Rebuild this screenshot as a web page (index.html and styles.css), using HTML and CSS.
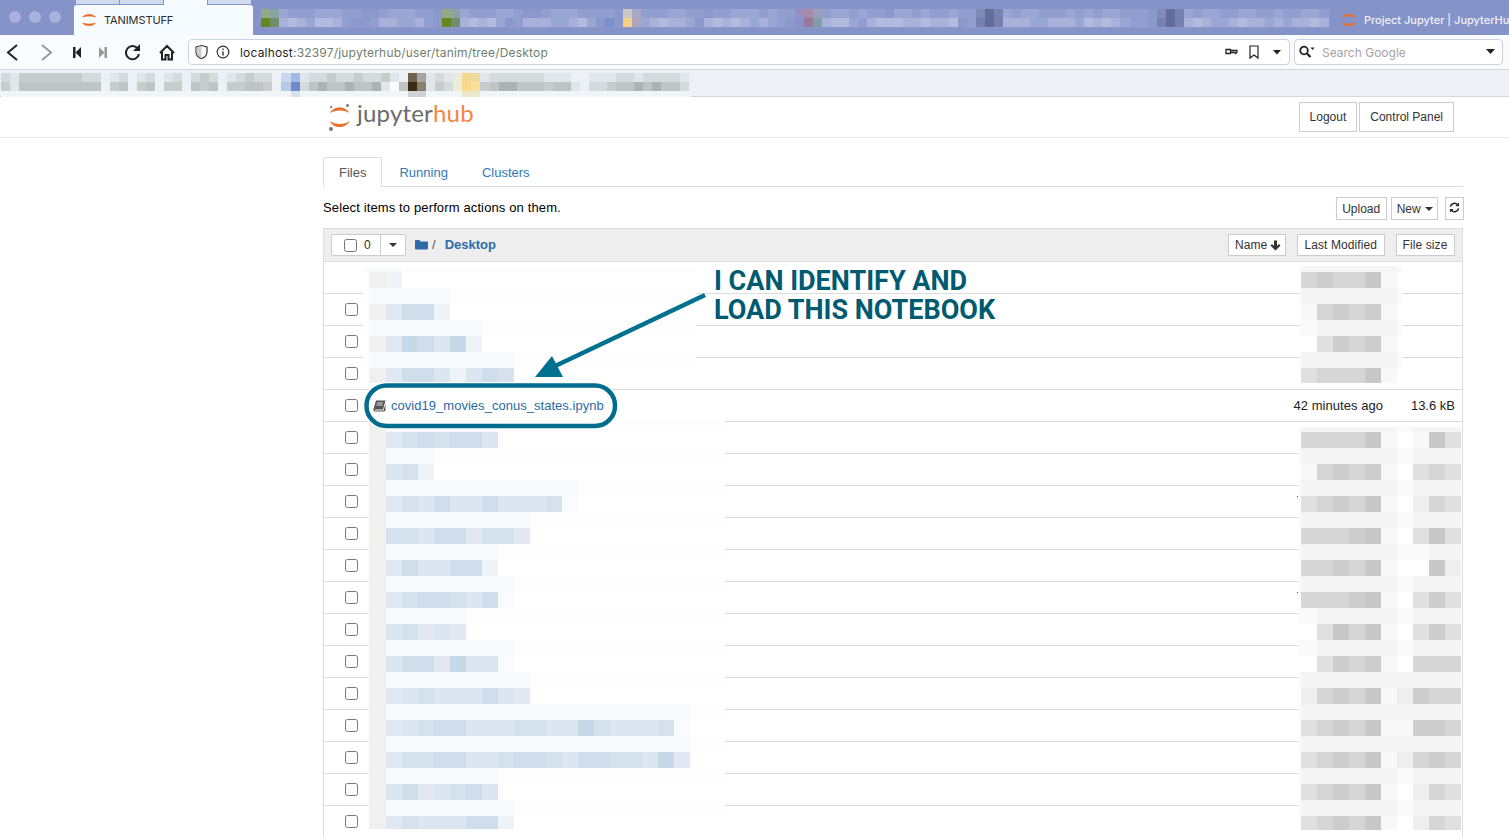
FILE: index.html
```html
<!DOCTYPE html>
<html>

<head>
	<title>Project Jupyter | JupyterHub</title>
	<link rel="stylesheet" href="styles.css">
</head>

<body>
	<div class="tabstrip">
		<div class="dots"><span></span><span></span><span></span></div>
		<div class="tab-marks"><span></span><span></span><span class="mark-open"></span><span></span></div>
		<div class="tab">
			<svg class="tab-icon" width="16" height="16" viewBox="0 0 16 16">
				<path d="M1 5.500C3 .8 13 .8 15 5.500C12 4 4 4 1 5.500Z" fill="#e8702a" />
				<path d="M1 10.500C3 15.200 13 15.200 15 10.500C12 12 4 12 1 10.500Z" fill="#e8702a" />
			</svg>
			<span>TANIMSTUFF</span>
		</div>
		<div class="mosaic" id="tabsBlur"></div>
		<div class="tab-other">
			<svg class="tab-icon" width="16" height="16" viewBox="0 0 16 16">
				<path d="M1 5.500C3 .8 13 .8 15 5.500C12 4 4 4 1 5.500Z" fill="#e8702a" />
				<path d="M1 10.500C3 15.200 13 15.200 15 10.500C12 12 4 12 1 10.500Z" fill="#e8702a" />
			</svg>
			<span>Project Jupyter | JupyterHub</span>
		</div>
	</div>

	<div class="toolbar">
		<svg class="nav-icons" width="188" height="34" viewBox="0 0 188 34">
			<path d="M17 10L8 17.500L17 25" fill="none" stroke="#222" stroke-width="2" />
			<path d="M42 10L51 17.500L42 25" fill="none" stroke="#999" stroke-width="2" />
			<path d="M73 12H75.500V23H73ZM75.500 17.500L81 12V23Z" fill="#222" />
			<path d="M107 12H104.500V23H107ZM104.500 17.500L99 12V23Z" fill="#999" />
			<path d="M138 14A6.600 6.600 0 1 0 139 19" fill="none" stroke="#222" stroke-width="2" />
			<path d="M140 9V16H133Z" fill="#222" />
			<path d="M160 18L167 11L174 18M162 17V24.500H165.500V20H168.500V24.500H172V17" fill="none" stroke="#222" stroke-width="2" />
		</svg>
		<div class="urlbar">
			<svg class="url-icons" width="45" height="16" viewBox="0 0 45 16">
				<path d="M1 3L6.500 1.500L12 3V8C12 11 9.500 13.500 6.500 14.500C3.500 13.500 1 11 1 8Z" fill="none" stroke="#333" stroke-width="1.200" />
				<path d="M6.500 2V14C3.500 13 1.500 11 1.500 8V3.400Z" fill="#ccc" />
				<circle cx="28" cy="8" r="5.800" fill="none" stroke="#333" stroke-width="1.200" />
				<path d="M28 7.500V11.500M28 4.500V6" stroke="#333" stroke-width="1.400" />
			</svg>
			<span class="url"><span class="url-host">localhost</span>:32397/jupyterhub/user/tanim/tree/Desktop</span>
			<svg class="url-end" width="62" height="16" viewBox="0 0 62 16">
				<path d="M1 5.500H5.500V9.500H1ZM5.500 6.500H12V8L10.800 9.500L9.800 8.500H5.500Z" fill="none" stroke="#222" stroke-width="1.300" />
				<path d="M25 2H33V14L29 11L25 14Z" fill="none" stroke="#222" stroke-width="1.200" />
				<path d="M48 6H56L52 10.500Z" fill="#222" />
			</svg>
		</div>
		<div class="searchbar">
			<svg width="20" height="16" viewBox="0 0 20 16">
				<circle cx="6" cy="6.500" r="3.800" fill="none" stroke="#222" stroke-width="1.800" />
				<path d="M9 9.500L12.500 13" stroke="#222" stroke-width="2.200" />
				<path d="M12.500 3.500H16.500L14.500 6Z" fill="#222" />
			</svg>
			<span class="search-text">Search Google</span>
			<svg class="search-end" width="12" height="8" viewBox="0 0 12 8">
				<path d="M1 1H10L5.500 6Z" fill="#222" />
			</svg>
		</div>
	</div>

	<div class="bookmarks">
		<div class="mosaic" id="bookmarksBlur"></div>
	</div>

	<div class="site-header">
		<div class="logo">
			<svg width="28" height="30" viewBox="0 0 28 30">
				<path d="M3 11C6 3.500 19 3.500 22.500 11C18 7.500 8 7.500 3 11Z" fill="#e8702a" />
				<path d="M3 19C6 27 19 27 22.500 19C18 23 8 23 3 19Z" fill="#e8702a" />
				<circle cx="20.500" cy="3.500" r="1.500" fill="#777" />
				<circle cx="4" cy="5" r="1.200" fill="#888" />
				<circle cx="4" cy="27" r="2" fill="#777" />
			</svg>
			<span class="logo-text">jupyter<span class="logo-hub">hub</span></span>
		</div>
		<div class="header-buttons">
			<button class="btn btn-header">Logout</button>
			<button class="btn btn-header">Control Panel</button>
		</div>
	</div>

	<div class="container">
		<div class="tabs">
			<a class="tab-link active">Files</a>
			<a class="tab-link">Running</a>
			<a class="tab-link">Clusters</a>
		</div>

		<div class="actions">
			<span class="hint">Select items to perform actions on them.</span>
			<div class="action-buttons">
				<button class="btn btn-small">Upload</button>
				<button class="btn btn-small btn-new">New <i class="caret"></i></button>
				<button class="btn btn-small btn-refresh">
					<svg width="11" height="11" viewBox="0 0 12 12">
						<path d="M1.500 5A4.600 4.600 0 0 1 9.500 3M10.500 7A4.600 4.600 0 0 1 2.500 9" fill="none" stroke="#222" stroke-width="1.700" />
						<path d="M11 .5V4.500H7ZM1 11.500V7.500H5Z" fill="#222" />
					</svg>
				</button>
			</div>
		</div>

		<div class="list">
			<div class="list-header">
				<div class="select-all">
					<span class="select-left"><input type="checkbox"> 0</span>
					<span class="select-right"><i class="caret"></i></span>
				</div>
				<svg class="folder" width="13" height="11" viewBox="0 0 13 11">
					<path d="M0 2Q0 1 1 1H4.500L5.500 2.500H12Q13 2.500 13 3.500V9.500Q13 10.500 12 10.500H1Q0 10.500 0 9.500Z" fill="#2d6ca8" />
				</svg>
				<span class="slash">/</span>
				<a class="crumb">Desktop</a>
				<div class="sort-buttons">
					<button class="btn btn-sort sort-name">Name
						<svg width="11" height="11" viewBox="0 0 11 11">
							<path d="M5.500 10.500L.5 5.500L2 4L4 6V.5H7V6L9 4L10.500 5.500Z" fill="#333" />
						</svg>
					</button>
					<button class="btn btn-sort">Last Modified</button>
					<button class="btn btn-sort">File size</button>
				</div>
			</div>
			<div id="rows"></div>
		</div>
	</div>

	<div class="mosaic blur-names blur-names-top" id="namesTop"></div>
	<div class="mosaic blur-names blur-names-rest" id="namesRest"></div>
	<div class="mosaic blur-meta blur-meta-top" id="metaTop"></div>
	<div class="mosaic blur-meta blur-meta-rest" id="metaRest"></div>

	<svg class="markup" width="1509" height="837" viewBox="0 0 1509 837">
		<rect x="366.500" y="385.500" width="248.500" height="40.500" rx="20" fill="#fff" stroke="#fff" stroke-width="7" />
		<rect x="366.500" y="385.500" width="248.500" height="40.500" rx="20" fill="#fff" stroke="#006d8f" stroke-width="4.500" />
		<path d="M705 295L553 367" stroke="#fff" stroke-width="6" />
		<path d="M705 295L553 367" stroke="#00708f" stroke-width="4.500" />
		<path d="M552 356L535 377H563Z" fill="#00708f" />
	</svg>
	<div class="note">I CAN IDENTIFY AND<br>LOAD THIS NOTEBOOK</div>

	<script src="script.js"></script>
</body>

</html>
```

FILE: styles.css
```css
html,
body {
	margin: 0;
	height: 837px;
	overflow: hidden;
	background-color: #fff;
}

body {
	font-family: "Liberation Sans", Arial, sans-serif;
	font-size: 13px;
	color: #333;
}

/* browser chrome */
.tabstrip {
	height: 35px;
	background-color: #8593c8;
	display: flex;
	position: relative;
	overflow: hidden;
	font-family: Inter, sans-serif;
}

.dots {
	flex: none;
	width: 74px;
	display: flex;
	gap: 8px;
	padding: 11px 0 0 9px;
	box-sizing: border-box;
}

.dots span {
	width: 12px;
	height: 12px;
	border-radius: 50%;
	background-color: #a8b2dc;
}

.tab-marks {
	position: absolute;
	left: 76px;
	top: 0;
	display: flex;
	gap: 1px;
}

.tab-marks span {
	width: 43px;
	height: 4px;
	background-color: #d3daf0;
}

.tab-marks .mark-open {
	height: 6px;
	background-color: #f6fbff;
}

.tab {
	flex: none;
	width: 179px;
	margin-top: 5px;
	background-color: #f6fbff;
	border-radius: 3px 3px 0 0;
	display: flex;
	align-items: center;
	gap: 7px;
	padding-left: 7px;
	box-sizing: border-box;
	font-size: 11px;
	letter-spacing: -0.1px;
	color: #2b2b2b;
	position: relative;
}

.tab-other {
	flex: none;
	width: 168px;
	margin-left: 11px;
	display: flex;
	align-items: center;
	gap: 7px;
	margin-top: 5px;
	font-size: 11px;
	font-weight: 500;
	color: #eef1fb;
	white-space: nowrap;
}

.tab-icon {
	flex: none;
}

.toolbar {
	height: 34px;
	background-color: #f9fbfe;
	display: flex;
	align-items: center;
	border-bottom: 1px solid #cfd5dc;
}

.nav-icons {
	flex: none;
}

.urlbar,
.searchbar {
	height: 24px;
	background-color: #fff;
	border: 1px solid #ccd2d9;
	border-radius: 4px;
	display: flex;
	align-items: center;
	font-family: Inter, sans-serif;
	font-size: 12px;
}

.urlbar {
	width: 1100px;
	margin-right: 4px;
}

.url-icons {
	margin-left: 6px;
}

.url {
	color: #6f7f6f;
	letter-spacing: 0.19px;
}

.url-host {
	color: #1f1f1f;
}

.url-end {
	margin-left: auto;
	margin-right: 2px;
}

.searchbar {
	width: 204px;
	padding-left: 3px;
}

.search-text {
	margin-left: 4px;
	color: #a4a4a4;
}

.search-end {
	margin-left: auto;
	margin-right: 5px;
}

.bookmarks {
	height: 27px;
	background-color: #edf1f5;
	border-bottom: 1px solid #d3d9df;
	padding: 3px 0 0 1px;
	box-sizing: border-box;
}

/* blurred-out regions, filled in by script.js */
.mosaic {
	--cell: 16px;
	--band: 16px;
	--first: 16px;
	--inset: 0px;
	--soft: #fdfdfd;
	overflow: hidden;
	flex: none;
}

.mosaic-row {
	display: flex;
	height: var(--band);
	padding-left: var(--inset);
}

.mosaic-row span {
	flex: none;
	width: var(--cell);
}

.blur-names,
.blur-meta {
	position: absolute;
}

.blur-names .mosaic-row:nth-child(odd),
.blur-meta .mosaic-row:nth-child(odd) {
	background-color: var(--soft);
}

.blur-names .mosaic-row:nth-child(even),
.blur-meta .mosaic-row:nth-child(even) {
	background-color: #fff;
}

.blur-names .mosaic-row:first-child,
.blur-meta .mosaic-row:first-child {
	height: var(--first);
}

.blur-names-top {
	left: 363px;
	top: 267px;
	width: 333px;
	height: 116px;
	--first: 5px;
	--inset: 6px;
}

.blur-names-rest {
	left: 369px;
	top: 420px;
	width: 356px;
	height: 409px;
	--first: 12px;
}

.blur-names .mosaic-row span:first-child {
	width: 17px;
}

.blur-meta {
	--soft: #fafafa;
}

.blur-meta-top {
	left: 1300px;
	top: 266px;
	width: 102px;
	height: 117px;
	--first: 6px;
	--inset: 1px;
}

.blur-meta-rest {
	left: 1298px;
	top: 427px;
	width: 163px;
	height: 403px;
	--first: 5px;
	--inset: 3px;
}

#tabsBlur {
	--cell: 9.05px;
	--band: 9px;
	width: 1069px;
	height: 19px;
	margin: 9px 0 0 8px;
	background-color: #8a98cb;
}

#bookmarksBlur {
	--cell: 9.05px;
	--band: 9px;
	width: 690px;
	height: 24px;
}

#bookmarksBlur .mosaic-row:last-child {
	height: 6px;
}

/* jupyterhub page */
.site-header {
	height: 41px;
	border-bottom: 1px solid #e7e7e7;
	box-sizing: border-box;
	padding: 5px 55px 0 327px;
	display: flex;
	justify-content: space-between;
}

.logo {
	display: flex;
	gap: 2px;
	align-items: flex-start;
}

.logo-text {
	font-family: Lato, sans-serif;
	font-size: 24px;
	line-height: 26px;
	margin-top: -2px;
	color: #6b6b6b;
	letter-spacing: 0.2px;
}

.logo-hub {
	color: #f5863f;
}

.header-buttons {
	display: flex;
	gap: 2px;
}

.btn {
	font-family: "Liberation Sans", Arial, sans-serif;
	background-color: #fff;
	border: 1px solid #ccc;
	color: #333;
	padding: 0 9px;
	cursor: pointer;
}

.btn-header {
	height: 30px;
	font-size: 12px;
	padding: 0 10px;
}

.container {
	width: 1140px;
	margin: 19px 0 0 323px;
}

.tabs {
	height: 29px;
	border-bottom: 1px solid #ddd;
	display: flex;
	font-size: 13px;
}

.tab-link {
	padding: 8px 17px 0;
	line-height: 15px;
	color: #337ab7;
}

.tab-link.active {
	height: 30px;
	padding: 7px 15px 0;
	box-sizing: border-box;
	color: #555;
	background-color: #fff;
	border: 1px solid #ddd;
	border-bottom-color: #fff;
	border-radius: 2px 2px 0 0;
}

.actions {
	height: 41px;
	display: flex;
	justify-content: space-between;
	color: #000;
	padding-top: 10px;
	box-sizing: border-box;
}

.hint {
	line-height: 21px;
	letter-spacing: 0.13px;
}

.action-buttons {
	display: flex;
	gap: 4px;
	margin-right: -1px;
}

.btn-small {
	height: 23px;
	font-size: 12px;
	padding: 0 5.5px;
}

.btn-new {
	padding: 0 4px 0 5px;
}

.btn-refresh {
	width: 19px;
	margin-left: 3px;
	padding: 0;
}

.caret {
	display: inline-block;
	width: 0;
	height: 0;
	margin-left: 1px;
	vertical-align: middle;
	border-top: 4px solid #333;
	border-left: 4px solid transparent;
	border-right: 4px solid transparent;
}

.list {
	border-left: 1px solid #ddd;
	border-right: 1px solid #ddd;
}

.list-header {
	height: 34px;
	background-color: #eee;
	border: 1px solid #ddd;
	border-left: 0;
	border-right: 0;
	box-sizing: border-box;
	display: flex;
	align-items: center;
	padding: 0 7px;
}

.select-all {
	display: flex;
	height: 22px;
	width: 75px;
	background-color: #fff;
	border: 1px solid #ccc;
	box-sizing: border-box;
	font-size: 12px;
	border-radius: 2px;
}

.select-left {
	width: 49px;
	padding-left: 12px;
	box-sizing: border-box;
	display: flex;
	align-items: center;
	gap: 7px;
	border-right: 1px solid #ccc;
}

.select-left input {
	margin: 0;
}

.select-right {
	flex: 1;
	display: flex;
	align-items: center;
	justify-content: center;
	padding-right: 2px;
}

.folder {
	margin: -2px 0 0 9px;
}

.slash {
	margin: -2px 0 0 4px;
	color: #555;
}

.crumb {
	margin: -2px 0 0 9px;
	font-weight: bold;
	color: #2d6ca8;
}

.sort-buttons {
	margin-left: auto;
	display: flex;
	gap: 11px;
}

.btn-sort {
	height: 22px;
	font-size: 12px;
	letter-spacing: 0.1px;
	padding: 0 6.5px 0 6px;
}

.sort-name {
	display: flex;
	align-items: center;
	gap: 3px;
	padding-right: 4px;
}

.row {
	position: relative;
	height: 32px;
	border-bottom: 1px solid #ddd;
	box-sizing: border-box;
	display: flex;
	align-items: center;
	padding: 0 7px 0 21px;
}

.row input {
	margin: 0;
	width: 13px;
	height: 13px;
}

.row-tick {
	position: absolute;
	left: 973px;
	top: 10px;
	width: 2px;
	height: 1px;
	background-color: #555;
}

.row-name {
	position: relative;
	z-index: 3;
	display: flex;
	align-items: center;
	gap: 5px;
	margin-left: 15px;
	letter-spacing: 0.03px;
	color: #2c6ba5;
}

.row-time {
	margin-left: auto;
	width: 140px;
	text-align: right;
	letter-spacing: 0.05px;
	color: #222;
	position: relative;
	z-index: 3;
}

.row-size {
	width: 72px;
	text-align: right;
	color: #222;
}

/* annotation drawn on top of the screenshot */
.markup {
	position: absolute;
	left: 0;
	top: 0;
	z-index: 2;
	pointer-events: none;
}

.note {
	position: absolute;
	left: 714px;
	top: 267px;
	z-index: 3;
	font-family: Roboto, sans-serif;
	font-size: 27px;
	font-weight: 700;
	line-height: 29px;
	color: #005a70;
}
```

FILE: script.js
```js
// Paints blocks of flat colour: one string per band, one letter per cell.
function paint(id, palette, rows) {
	const box = document.getElementById(id);
	rows.forEach(function (row) {
		const line = document.createElement('div');
		line.classList.add('mosaic-row');
		row.split('').forEach(function (letter) {
			const cell = document.createElement('span');
			if (palette[letter]) cell.style.background = palette[letter];
			line.appendChild(cell);
		});
		box.appendChild(line);
	});
}

// Each list row blurs to a soft band above a stronger one.
function withSoftBands(rows, keep) {
	const out = [];
	rows.forEach(function (row) {
		out.push(row.replace(/./g, function (c) {
			return c === '.' || c === keep ? c : 'l';
		}));
		out.push(row);
	});
	return out;
}

const blues = {
	g: '#f0f0ee', l: '#f7f9fb', u: '#f9fbfd', v: '#eef3f8', w: '#e1e8f1', x: '#dbe6f0',
	y: '#d5e2ed', z: '#cfdeea', q: '#c7d9e9'
};
const greys = {
	l: '#f5f5f5', a: '#f8f8f8', b: '#eeeeee', c: '#e0e0e0', d: '#d6d6d6', e: '#cdcdcd', f: '#c8c8c8'
};

paint('namesTop', blues, withSoftBands(['gv', 'gwzzv', 'gwqzxqv', 'gwzzxvxzy']));
paint('namesRest', blues, withSoftBands([
	'gwyzyzzx', 'gxyv', 'gwyxzxxzxxxyu', 'gyyxzzwyyw', 'gwzxxzzv', 'gwyzzyxzu', 'gxywxw',
	'gxzzwqxxu', 'gwxyxxxzxw', 'gwxyzzxxxyyxxqyxxxyu', 'gwyyzzxxyzzyxzzyyxqw', 'gxzwxyzx',
	'gwyxxxzzv'
], 'g'));
paint('metaTop', greys, withSoftBands(['deddfa', 'adedea', '.cedea', 'cdddfa']));
paint('metaRest', greys, withSoftBands([
	'ddddfa.afc', 'adedea.cdc', 'cdedfa.bdc', 'dddefa.cfc', 'ddedfa..fb', 'dddefa.cec',
	'.cfdfa.cec', '.cedea.ddd', 'bdedfabedd', 'cdedfaaeed', 'cdedfabded', 'cdedfa.bdc', 'cdedfa.bdc'
]));

paint('tabsBlur', {
	a: '#8a98cb', b: '#929ecf', c: '#9aa6d3', d: '#a7b1da', e: '#b1bbde',
	G: '#93aa86', H: '#8aa3a0', I: '#66871e', J: '#6f8f6c',
	Y: '#cbc8c0', Z: '#a8a8c8', Q: '#f3cf88', R: '#aba6bb', U: '#7a8fd0',
	K: '#9a8fc0', L: '#a78aa8', M: '#98a0ba', N: '#8a8fd0', O: '#977a9a', P: '#7f9fa8',
	S: '#808bb5', T: '#626f9e', V: '#7782ae', W: '#5f6c9a', X: '#7680ae'
}, [
	'GHcbbbcccbbaabcccbba' + 'GHcbbbccbaabcccbbbba' + 'YZbbbccbbabbcccbcbb' +
	'KLMbccbcbbaccbcbbcbb' + 'STVcbccbbbcbcbccbbba' + 'STVcbccbbccbbcbbccba',
	'IJdedceedbaabddccdba' + 'IJdedecabdddccdecaUa' + 'QRcdeddcadededcdcba' +
	'NOPdeecbdeeeddeddeab' + 'XWXdddccdddcededcbba' + 'XWXdedccdeddcdcddeda'
]);

paint('bookmarksBlur', {
	a: '#e1e6ea', b: '#d5dadd', c: '#c7cccd', d: '#bfc5c5', e: '#adb3b3', w: '#fbfdff', l: '#f2f5f8',
	B: '#c8d6ee', C: '#a3bae8', I: '#b8caea', J: '#708cca', P: '#d8e2ee',
	D: '#6e6250', E: '#a5a59f', K: '#3a2a10', L: '#86806f', R: '#d0d3d6',
	F: '#ebebdc', G: '#f5d78f', H: '#eddca0', M: '#eeecd8', N: '#f8d98c', O: '#fbe09a', T: '#ebe7cc'
}, [
	'bacccccccbb.ab.ab.ab.bcb.abcbb.' + 'BC' + 'abbcbbcbbca.' + 'DE' + 'aba' + 'FGH' + 'abbbbbbaaa..aaabbabbbba',
	'caddddddddd.cd.cd.cc.dcd.ccddc.' + 'IJ' + 'bdeddeddeawd' + 'KL' + 'acb' + 'MNO' + 'cdeedddcdda.bbcddededdb',
	'l'.repeat(32) + 'P' + 'l'.repeat(12) + 'RR' + 'l'.repeat(4) + 'TT' + 'l'.repeat(24)
]);

// File list rows: only the notebook row is readable.
const rows = document.getElementById('rows');
for (let i = 0; i < 18; i++) {
	const row = document.createElement('div');
	row.classList.add('row');
	if (i > 0) {
		const check = document.createElement('input');
		check.type = 'checkbox';
		row.appendChild(check);
	}
	if (i === 7 || i === 10) {
		row.insertAdjacentHTML('beforeend', '<span class="row-tick"></span>');
	}
	if (i === 4) {
		row.insertAdjacentHTML('beforeend',
			'<span class="row-name">' +
			'<svg width="13" height="12" viewBox="0 0 13 12">' +
			'<path d="M3 .5H12.500L10 9.500H2.500Q1.500 9.500 1.800 10.500H10.500L12.500 4V10.500L11 11.500H2Q0 11.500 .5 9Z" fill="#555"/>' +
			'<path d="M4 3H10M3.500 5H9.500" stroke="#fff" stroke-width=".8"/></svg>' +
			'covid19_movies_conus_states.ipynb</span>' +
			'<span class="row-time">42 minutes ago</span>' +
			'<span class="row-size">13.6 kB</span>');
	}
	rows.appendChild(row);
}
```
